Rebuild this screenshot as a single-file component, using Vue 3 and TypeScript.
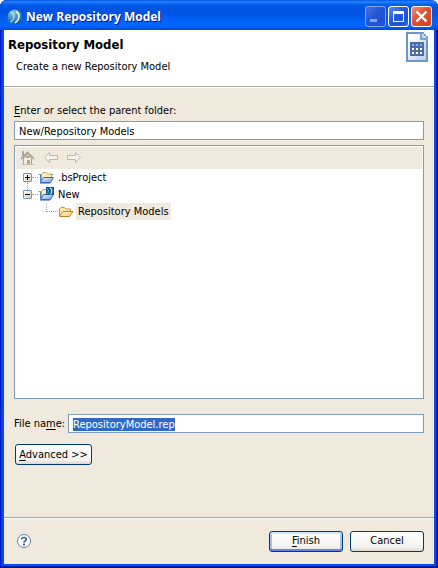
<script setup lang="ts">
import { computed, onMounted, ref } from 'vue'

interface TreeItem {
  name: string
  level: number
  kind: 'project' | 'model' | 'folder'
  path: string
  expandable: boolean
}

const parentFolder = ref('New/Repository Models')
const fileName = ref('RepositoryModel.rep')
const fileInput = ref<HTMLInputElement | null>(null)
const newOpen = ref(true)

const items: TreeItem[] = [
  { name: '.bsProject', level: 1, kind: 'project', path: '.bsProject', expandable: true },
  { name: 'New', level: 1, kind: 'model', path: 'New', expandable: true },
  { name: 'Repository Models', level: 2, kind: 'folder', path: 'New/Repository Models', expandable: false },
]

const visibleItems = computed(() => items.filter((item) => item.level === 1 || newOpen.value))

function isOpen(item: TreeItem): boolean {
  return item.kind === 'model' && newOpen.value
}

function toggle(item: TreeItem): void {
  if (item.kind === 'model') newOpen.value = !newOpen.value
}

onMounted(() => {
  fileInput.value?.focus()
  fileInput.value?.select()
})
</script>

<template>
  <div class="window" role="dialog" aria-labelledby="window-title">
    <header class="titlebar">
      <svg class="app-icon" width="16" height="16" viewBox="0 0 16 16" aria-hidden="true">
        <defs>
          <radialGradient id="globe" cx="0.35" cy="0.2" r="0.85">
            <stop offset="0" stop-color="#94c8dc" />
            <stop offset="0.5" stop-color="#4490bc" />
            <stop offset="1" stop-color="#1054a0" />
          </radialGradient>
        </defs>
        <circle cx="8" cy="8" r="7.5" fill="url(#globe)" />
        <path d="M3.500 3Q7.500 4.500 7 8Q6.500 11 3.500 13" fill="none" stroke="#b8e0ec" stroke-width="1.200" />
        <path d="M9 2.500Q12.500 4.500 12 8Q11.500 11.500 8 14" fill="none" stroke="#f4fcff" stroke-width="1.500" />
      </svg>
      <h1 id="window-title">New Repository Model</h1>
      <div class="window-buttons">
        <button type="button" class="minimize" aria-label="Minimize" disabled>
          <svg width="19" height="19" viewBox="0 0 19 19"><path d="M4 12h7v3H4z" fill="#89a5ef" /></svg>
        </button>
        <button type="button" aria-label="Maximize">
          <svg width="19" height="19" viewBox="0 0 19 19" shape-rendering="crispEdges">
            <path d="M4 4h11v11H4zM5 7v7h9V7z" fill="#fff" fill-rule="evenodd" />
          </svg>
        </button>
        <button type="button" class="close" aria-label="Close">
          <svg width="19" height="19" viewBox="0 0 19 19">
            <path d="M4.500 4.500l10 10M14.500 4.500l-10 10" stroke="#fff" stroke-width="2.400" />
          </svg>
        </button>
      </div>
    </header>

    <section class="banner">
      <div>
        <h2>Repository Model</h2>
        <p>Create a new Repository Model</p>
      </div>
      <svg width="22" height="30" viewBox="0 0 22 30" aria-hidden="true" shape-rendering="crispEdges">
        <defs>
          <linearGradient id="page" x1="0" y1="0" x2="1" y2="1">
            <stop offset="0.2" stop-color="#fff" />
            <stop offset="1" stop-color="#b4c8e8" />
          </linearGradient>
        </defs>
        <path d="M1 1h15l5 5v23H1z" fill="url(#page)" stroke="#6c98cc" stroke-width="2" />
        <path d="M16 0h6v6h-6z" fill="#fff" />
        <path d="M16 0h2v2h2v2h2v4h-6z" fill="#c8d8ec" />
        <path d="M14 2h2v4h4v2h-6zM16 0h2v2h-2zM18 2h2v2h-2zM20 4h2v4h-2z" fill="#80a4d0" />
        <path d="M4 10h14v14H4z" fill="#506ca4" />
        <path d="M6 12h2v2H6zM10 12h2v2h-2zM14 12h2v2h-2z" fill="#6cb8f0" />
        <path
          d="M6 16h2v2H6zM10 16h2v2h-2zM14 16h2v2h-2zM6 20h2v2H6zM10 20h2v2h-2zM14 20h2v2h-2z"
          fill="#fff"
        />
      </svg>
    </section>

    <main class="content">
      <label class="folder-label" for="parent-folder"><u>E</u>nter or select the parent folder:</label>
      <input id="parent-folder" v-model="parentFolder" type="text" />

      <div class="browser">
        <div class="toolbar">
          <button type="button" aria-label="Home" disabled>
            <svg width="16" height="16" viewBox="0 0 16 16">
              <path d="M2 1h2v5H2z" fill="#aca899" />
              <path d="M3.500 8.500L7.500 4l4 4.500v6h-8z" fill="#f0ece2" stroke="#aca899" />
              <path d="M1 9L7.500 2.500 14 9" fill="none" stroke="#aca899" stroke-width="1.800" />
              <path d="M6 6h3v2H6zM7 10h3v5H7z" fill="#aca899" />
              <path d="M1.500 14.500h12.500" stroke="#c4c0b0" />
            </svg>
          </button>
          <button type="button" aria-label="Back" disabled>
            <svg width="16" height="16" viewBox="0 0 16 16">
              <path d="M1.500 7.500l5-5v3h8v4h-8v3z" fill="#f4f2ec" stroke="#bcb8b4" />
            </svg>
          </button>
          <button type="button" aria-label="Forward" disabled>
            <svg width="16" height="16" viewBox="0 0 16 16">
              <path d="M14.500 7.500l-5-5v3h-8v4h8v3z" fill="#f4f2ec" stroke="#bcb8b4" />
            </svg>
          </button>
        </div>

        <ul class="tree" role="tree" aria-label="Folders">
          <li
            v-for="item in visibleItems"
            :key="item.path"
            role="treeitem"
            :aria-level="item.level"
            :aria-selected="item.path === parentFolder"
            :aria-expanded="item.expandable ? isOpen(item) : undefined"
            :class="['row', item.kind]"
          >
            <button
              v-if="item.expandable"
              type="button"
              class="expander"
              :aria-label="`Toggle ${item.name}`"
              @click="toggle(item)"
            >
              <svg width="7" height="7" viewBox="0 0 7 7" shape-rendering="crispEdges">
                <path :d="isOpen(item) ? 'M1 3h5v1H1z' : 'M1 3h5v1H1zM3 1h1v5H3z'" fill="#000" />
              </svg>
            </button>
            <span class="branch"></span>
            <svg
              v-if="item.kind === 'folder'"
              class="folder-icon"
              width="16"
              height="16"
              viewBox="0 0 16 16"
              aria-hidden="true"
            >
              <defs>
                <linearGradient id="folder-flap" x1="0" y1="0" x2="1" y2="1">
                  <stop offset="0" stop-color="#fff8d4" />
                  <stop offset="1" stop-color="#f8cc70" />
                </linearGradient>
              </defs>
              <path d="M1.500 12V5l1.500-1.500h3.500L8 5h4.500v3" fill="#fce8a8" stroke="#cc8c30" />
              <path d="M1.500 12.500L5 7.500h10l-3.500 5z" fill="url(#folder-flap)" stroke="#c08028" />
            </svg>
            <svg v-else class="folder-icon" width="16" height="16" viewBox="0 0 16 16" aria-hidden="true">
              <defs>
                <linearGradient :id="`flap-${item.kind}`" x1="0" y1="0" x2="1" y2="1">
                  <stop offset="0" stop-color="#f0f8ff" />
                  <stop offset="1" stop-color="#6c9cdc" />
                </linearGradient>
              </defs>
              <path d="M0 4h3v1H1z" fill="#6c9cd0" />
              <path d="M2.500 12V5" stroke="#5c84c4" />
              <path d="M3.500 11V4l1.500-1.500h3L9.500 4h4v4" fill="#fff0b8" stroke="#d4a050" />
              <path d="M13.500 4.500h2" stroke="#6c9cd0" />
              <path
                d="M2.500 12.500L5.500 7.500h10l-3 5z"
                :fill="`url(#flap-${item.kind})`"
                stroke="#4068b8"
              />
              <path d="M2 13.500h10" stroke="#90acd8" />
              <g v-if="item.kind === 'model'">
                <path d="M8 0h8v8H8z" fill="#0c5c90" />
                <path d="M9 1.500q2.500 1.500 .5 5.500" fill="none" stroke="#70b8dc" />
                <path d="M12 1q3.500 2 .5 6.500" fill="none" stroke="#c8ecf8" stroke-width="1.200" />
              </g>
            </svg>
            <span class="name" @click="parentFolder = item.path">{{ item.name }}</span>
          </li>
        </ul>
      </div>

      <div class="file-row">
        <label for="file-name">File na<u>m</u>e:</label>
        <input id="file-name" ref="fileInput" v-model="fileName" type="text" />
      </div>
      <button type="button" class="push advanced"><u>A</u>dvanced &gt;&gt;</button>
    </main>

    <footer class="footer">
      <button type="button" class="help" aria-label="Help">
        <svg width="16" height="16" viewBox="0 0 16 16">
          <circle cx="8" cy="8" r="6.500" fill="#fff" stroke="#6480a4" />
          <path
            d="M5.700 6.400Q5.700 4.500 8 4.500Q10.300 4.500 10.300 6.300Q10.300 7.400 9 8Q8 8.500 8 9.700"
            fill="none"
            stroke="#405c8c"
            stroke-width="1.600"
          />
          <path d="M7 10.700h2v1.700H7z" fill="#405c8c" />
        </svg>
      </button>
      <button type="button" class="push default"><u>F</u>inish</button>
      <button type="button" class="push">Cancel</button>
    </footer>
  </div>
</template>

<style>
body {
  background: #fff;
}
</style>

<style scoped>
* {
  box-sizing: border-box;
}

.window {
  display: flex;
  flex-direction: column;
  min-height: 100vh;
  padding: 0 4px 4px;
  border-radius: 7px 7px 0 0;
  background: #0050f0;
  box-shadow: inset -1px -1px #00138c, inset 1px 0 #0019cf, inset -2px -2px #001ea0, inset 2px 0 #0831d9;
  color: #000;
  font: 11px/14px "DejaVu Sans Condensed", "Noto Sans", sans-serif;
  overflow: hidden;
}

h1,
h2,
p,
ul {
  margin: 0;
  padding: 0;
}

button,
input {
  font: inherit;
  color: inherit;
}

svg {
  display: block;
}

u {
  text-underline-offset: 2px;
}

.titlebar {
  display: flex;
  align-items: center;
  height: 30px;
  margin: 0 -4px;
  padding: 3px 6px 0 7px;
  border-radius: 7px 7px 0 0;
  background: linear-gradient(#0058e6 0, #2a83f8 2px, #0064f0 4px, #0054e3 7px, #0054e3 14px, #0062fb 21px, #0066ff 26px, #004ad8 30px);
}

h1 {
  flex: 1;
  margin-left: 3px;
  color: #fff;
  font: bold 12px/18px "Open Sans", sans-serif;
  text-shadow: 1px 1px #0a1883;
}

.window-buttons {
  display: flex;
  gap: 2px;
}

.window-buttons button {
  width: 21px;
  height: 21px;
  padding: 0;
  border: 1px solid #fff;
  border-radius: 3px;
  background: linear-gradient(135deg, #5c8cf4, #2458dc 45%, #1c50d8 75%, #2c70f8);
}

.window-buttons .minimize {
  border-color: #84a4f0;
  background: linear-gradient(135deg, #4470e4, #2254d4 50%, #1c54dc);
}

.window-buttons .close {
  background: linear-gradient(135deg, #f09078, #e05030 45%, #d84018);
}

.banner {
  display: flex;
  justify-content: space-between;
  height: 57px;
  padding: 2px 6px 0 4px;
  border-bottom: 1px solid #aca899;
  background: #fff;
}

h2 {
  margin-top: 5px;
  font: bold 13px/16px "DejaVu Sans Condensed", sans-serif;
}

.banner p {
  margin: 7px 0 0 8px;
}

.content {
  flex: 1;
  display: flex;
  flex-direction: column;
  padding: 16px 10px 52px;
  border-top: 1px solid #fff;
  background: #efe9de;
}

.folder-label {
  margin-bottom: 3px;
}

input {
  width: 100%;
  min-width: 0;
  height: 19px;
  padding: 1px 4px 0;
  border: 1px solid #7f9db9;
  border-radius: 0;
  outline: none;
  background: #fff;
}

input::selection {
  background: #316ac5;
  color: #fff;
}

.browser {
  flex: 1;
  margin-top: 5px;
  padding: 1px;
  border: 1px solid #7f9db9;
  background: #fff;
}

.toolbar {
  display: flex;
  gap: 7px;
  height: 22px;
  padding: 3px 4px;
  background: #efe9de;
}

.toolbar button {
  padding: 0;
  border: 0;
  background: none;
}

.tree {
  list-style: none;
}

.row {
  position: relative;
  display: flex;
  align-items: center;
  height: 17px;
  padding-left: 7px;
}

.expander {
  z-index: 1;
  width: 9px;
  height: 9px;
  padding: 0;
  border: 1px solid #7898b5;
  border-radius: 1px;
  background: linear-gradient(135deg, #fff, #d4d0c0);
}

.branch {
  width: 6px;
  border-top: 1px dotted #aca899;
}

.folder {
  padding-left: 30px;
}

.folder .branch {
  width: 12px;
}

.row.project::after,
.row.folder::after {
  content: "";
  position: absolute;
  border-left: 1px dotted #aca899;
}

.row.project::after {
  top: 13px;
  left: 11px;
  height: 8px;
}

.row.folder::after {
  top: 0;
  left: 30px;
  height: 9px;
}

.folder-icon {
  margin-right: 2px;
}

.name {
  padding: 1px 2px 0;
  line-height: 16px;
}

.row[aria-selected="true"] .name {
  background: #efe9de;
}

.file-row {
  display: flex;
  align-items: center;
  gap: 3px;
  margin-top: 15px;
}

.file-row label {
  flex: none;
}

.push {
  width: 74px;
  height: 21px;
  padding: 0;
  border: 1px solid #003c74;
  border-radius: 3px;
  background: linear-gradient(#fff, #f4f2ee 80%, #dcd6cc);
  text-align: center;
}

.push.default {
  box-shadow: inset 0 2px #cee7ff, inset 0 -2px #6982ee, inset 2px 0 #a4c0f4, inset -2px 0 #a4c0f4;
}

.advanced {
  width: 77px;
  margin: 11px 0 0 1px;
}

.footer {
  display: flex;
  align-items: center;
  gap: 7px;
  height: 47px;
  padding: 0 10px 0 12px;
  border-top: 1px solid #aca899;
  background: #efe9de;
  box-shadow: inset 0 1px #fff;
}

.help {
  margin-right: auto;
  padding: 0;
  border: 0;
  background: none;
}
</style>
